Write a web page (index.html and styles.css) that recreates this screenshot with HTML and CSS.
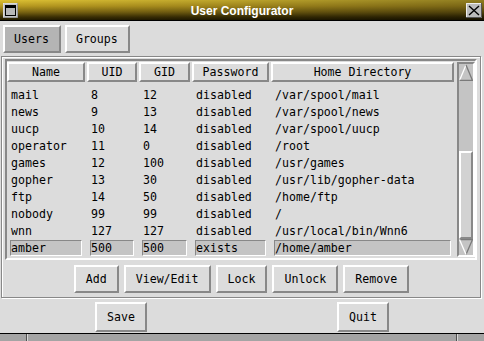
FILE: index.html
```html
<!DOCTYPE html>
<html lang="en">
<head>
  <meta charset="UTF-8" />
  <title>User Configurator</title>
  <link rel="stylesheet" href="styles.css">
</head>
<body>

  <div class="window">
    <div class="titlebar">
      <span class="win-icon">
        <svg width="15" height="15" viewBox="0 0 15 15">
          <rect x="0" y="0" width="15" height="15" fill="#c4c4c4"/>
          <path d="M0 0H15M0 0V15" stroke="#ececec" stroke-width="1" fill="none"/>
          <path d="M15 0V15H0" stroke="#6a6a6a" stroke-width="1" fill="none"/>
          <rect x="2.5" y="2.5" width="10" height="10" fill="#b8b8b8" stroke="#000" stroke-width="1"/>
          <rect x="3" y="3" width="9" height="2" fill="#000"/>
        </svg>
      </span>
      <span class="title">User Configurator</span>
      <span class="close-btn">
        <svg width="16" height="15" viewBox="0 0 16 15">
          <rect x="0" y="0" width="16" height="15" fill="#bcbcbc"/>
          <path d="M0.5 15V0.5H16" stroke="#eeeeee" fill="none"/>
          <path d="M15.5 0V14.5H0" stroke="#555" fill="none"/>
          <path d="M3 3L13 12M13 3L3 12" stroke="#000" stroke-width="1.4"/>
        </svg>
      </span>
    </div>

    <div class="tabs">
      <button class="tab active">Users</button>
      <button class="tab">Groups</button>
    </div>

    <div class="frame">
      <div class="listbox">
        <div class="list-main">
          <div class="header-row">
            <div class="hcell">Name</div>
            <div class="hcell">UID</div>
            <div class="hcell">GID</div>
            <div class="hcell">Password</div>
            <div class="hcell">Home Directory</div>
          </div>
          <div class="rows">
            <div class="row"><span class="cell">mail</span><span class="cell">8</span><span class="cell">12</span><span class="cell">disabled</span><span class="cell">/var/spool/mail</span></div>
            <div class="row"><span class="cell">news</span><span class="cell">9</span><span class="cell">13</span><span class="cell">disabled</span><span class="cell">/var/spool/news</span></div>
            <div class="row"><span class="cell">uucp</span><span class="cell">10</span><span class="cell">14</span><span class="cell">disabled</span><span class="cell">/var/spool/uucp</span></div>
            <div class="row"><span class="cell">operator</span><span class="cell">11</span><span class="cell">0</span><span class="cell">disabled</span><span class="cell">/root</span></div>
            <div class="row"><span class="cell">games</span><span class="cell">12</span><span class="cell">100</span><span class="cell">disabled</span><span class="cell">/usr/games</span></div>
            <div class="row"><span class="cell">gopher</span><span class="cell">13</span><span class="cell">30</span><span class="cell">disabled</span><span class="cell">/usr/lib/gopher-data</span></div>
            <div class="row"><span class="cell">ftp</span><span class="cell">14</span><span class="cell">50</span><span class="cell">disabled</span><span class="cell">/home/ftp</span></div>
            <div class="row"><span class="cell">nobody</span><span class="cell">99</span><span class="cell">99</span><span class="cell">disabled</span><span class="cell">/</span></div>
            <div class="row"><span class="cell">wnn</span><span class="cell">127</span><span class="cell">127</span><span class="cell">disabled</span><span class="cell">/usr/local/bin/Wnn6</span></div>
            <div class="row selected"><span class="cell">amber</span><span class="cell">500</span><span class="cell">500</span><span class="cell">exists</span><span class="cell">/home/amber</span></div>
          </div>
        </div>

        <div class="scrollbar">
          <svg class="arrow" width="14" height="17" viewBox="0 0 14 17">
            <path d="M7 1L0.5 16.5" stroke="#ffffff" stroke-width="1.3" fill="none"/>
            <path d="M7 1L13.5 16.5H0.5" stroke="#7a7a7a" stroke-width="1.3" fill="none"/>
          </svg>
          <div class="track">
            <div class="thumb"></div>
          </div>
          <svg class="arrow" width="14" height="16" viewBox="0 0 14 16">
            <path d="M0.5 0.5H13.5L7 15.5" stroke="#7a7a7a" stroke-width="1.3" fill="none"/>
            <path d="M0.5 0.5L7 15.5" stroke="#ffffff" stroke-width="1.3" fill="none"/>
          </svg>
        </div>
      </div>

      <div class="actions">
        <button class="btn">Add</button>
        <button class="btn">View/Edit</button>
        <button class="btn">Lock</button>
        <button class="btn">Unlock</button>
        <button class="btn">Remove</button>
      </div>
    </div>

    <div class="bottom-buttons">
      <button class="btn big">Save</button>
      <button class="btn big">Quit</button>
    </div>

    <div class="resize-bar">
      <span class="seg left"></span>
      <span class="seg mid"></span>
      <span class="seg right"></span>
    </div>
  </div>

</body>
</html>
```

FILE: styles.css
```css
:root {
  --bg: #dcdcdc;
  --light: #ffffff;
  --dark: #888888;
  --mid: #c4c4c4;
}

body {
  margin: 0;
  padding: 0;
  background: var(--bg);
  font-family: 'DejaVu Sans Mono', 'Liberation Mono', monospace;
  font-size: 11.6px;
  color: #000;
}

.window {
  width: 484px;
  height: 341px;
  display: flex;
  flex-direction: column;
  overflow: hidden;
}

/* title bar */
.titlebar {
  height: 20px;
  border-bottom: 1px solid #000;
  display: flex;
  align-items: flex-start;
  background:
    linear-gradient(to right, rgba(0, 0, 0, 0) 0%, rgba(0, 0, 0, 0.15) 50%, rgba(0, 0, 0, 0.35) 100%),
    linear-gradient(to bottom, #dcc033 0%, #b89a20 30%, #7c6612 60%, #3c3004 85%, #221b00 100%);
}

.win-icon {
  margin: 3px 0 0 3px;
  width: 15px;
  height: 15px;
  display: block;
}

.win-icon svg,
.close-btn svg {
  display: block;
}

.title {
  flex: 1;
  text-align: center;
  color: #fff;
  font-family: 'Liberation Sans', Arial, sans-serif;
  font-weight: 700;
  font-size: 12px;
  line-height: 20px;
  padding-top: 1px;
}

.close-btn {
  margin: 3px 2px 0 0;
  width: 16px;
  height: 15px;
  display: block;
}

/* tabs */
.tabs {
  display: flex;
  gap: 4px;
  padding: 4px 3px 3px;
}

button {
  font-family: inherit;
  font-size: inherit;
  color: #000;
  background: var(--bg);
  border: 2px solid;
  border-color: var(--light) var(--dark) var(--dark) var(--light);
  border-radius: 0;
  margin: 0;
  cursor: pointer;
}

.tab {
  height: 28px;
  padding: 0 10px 0 9px;
}

.tab.active {
  background: #b4b4b4;
}

/* framed list area */
.frame {
  margin: 0 3px 0 1px;
  padding: 2px 3px 4px;
  border: 1px solid var(--dark);
  box-shadow: inset 1px 1px 0 var(--light), 1px 1px 0 var(--light);
}

.listbox {
  display: flex;
  gap: 3px;
  padding: 1px 0;
  border: 2px solid;
  border-color: var(--dark) var(--light) var(--light) var(--dark);
}

.list-main {
  width: 447px;
}

.header-row,
.row {
  display: grid;
  grid-template-columns: 78px 50px 51px 77px 183px;
  column-gap: 2px;
}

.hcell {
  height: 20px;
  box-sizing: border-box;
  border: 2px solid;
  border-color: var(--light) var(--dark) var(--dark) var(--light);
  text-align: center;
  line-height: 16px;
}

.rows {
  margin-top: 5px;
}

.row {
  height: 17px;
}

.cell {
  height: 16px;
  box-sizing: border-box;
  margin: 0 3px;
  border: 1px solid transparent;
  line-height: 14px;
  white-space: nowrap;
}

.row.selected .cell {
  background: var(--mid);
  border-color: var(--dark) var(--light) var(--light) var(--dark);
}

/* scrollbar */
.scrollbar {
  width: 18px;
  box-sizing: border-box;
  display: flex;
  flex-direction: column;
  align-items: center;
  background: var(--mid);
  border: 2px solid;
  border-color: var(--dark) var(--light) var(--light) var(--dark);
}

.arrow {
  display: block;
  flex: none;
}

.track {
  flex: 1;
  width: 14px;
  display: flex;
  flex-direction: column;
  justify-content: flex-end;
}

.thumb {
  height: 88px;
  box-sizing: border-box;
  background: #d2d2d2;
  border: 2px solid;
  border-color: var(--light) var(--dark) var(--dark) var(--light);
}

/* buttons */
.actions {
  display: flex;
  justify-content: center;
  gap: 5px;
  margin-top: 5px;
  padding-left: 1px;
}

.btn {
  height: 28px;
  padding: 0 10px;
}

.bottom-buttons {
  display: grid;
  grid-template-columns: 1fr 1fr;
  justify-items: center;
  padding: 4px 0 1px;
}

.btn.big {
  height: 30px;
  padding: 0 10px;
}

/* window bottom border */
.resize-bar {
  border-top: 1px solid #000;
  height: 7px;
  display: flex;
}

.seg {
  display: block;
  background: #a4a4a4;
  border-left: 1px solid #d8d8d8;
  border-right: 1px solid #505050;
}

.seg.left {
  width: 26px;
  border-left: none;
}

.seg.mid {
  flex: 1;
}

.seg.right {
  width: 26px;
  border-right: none;
}
```
